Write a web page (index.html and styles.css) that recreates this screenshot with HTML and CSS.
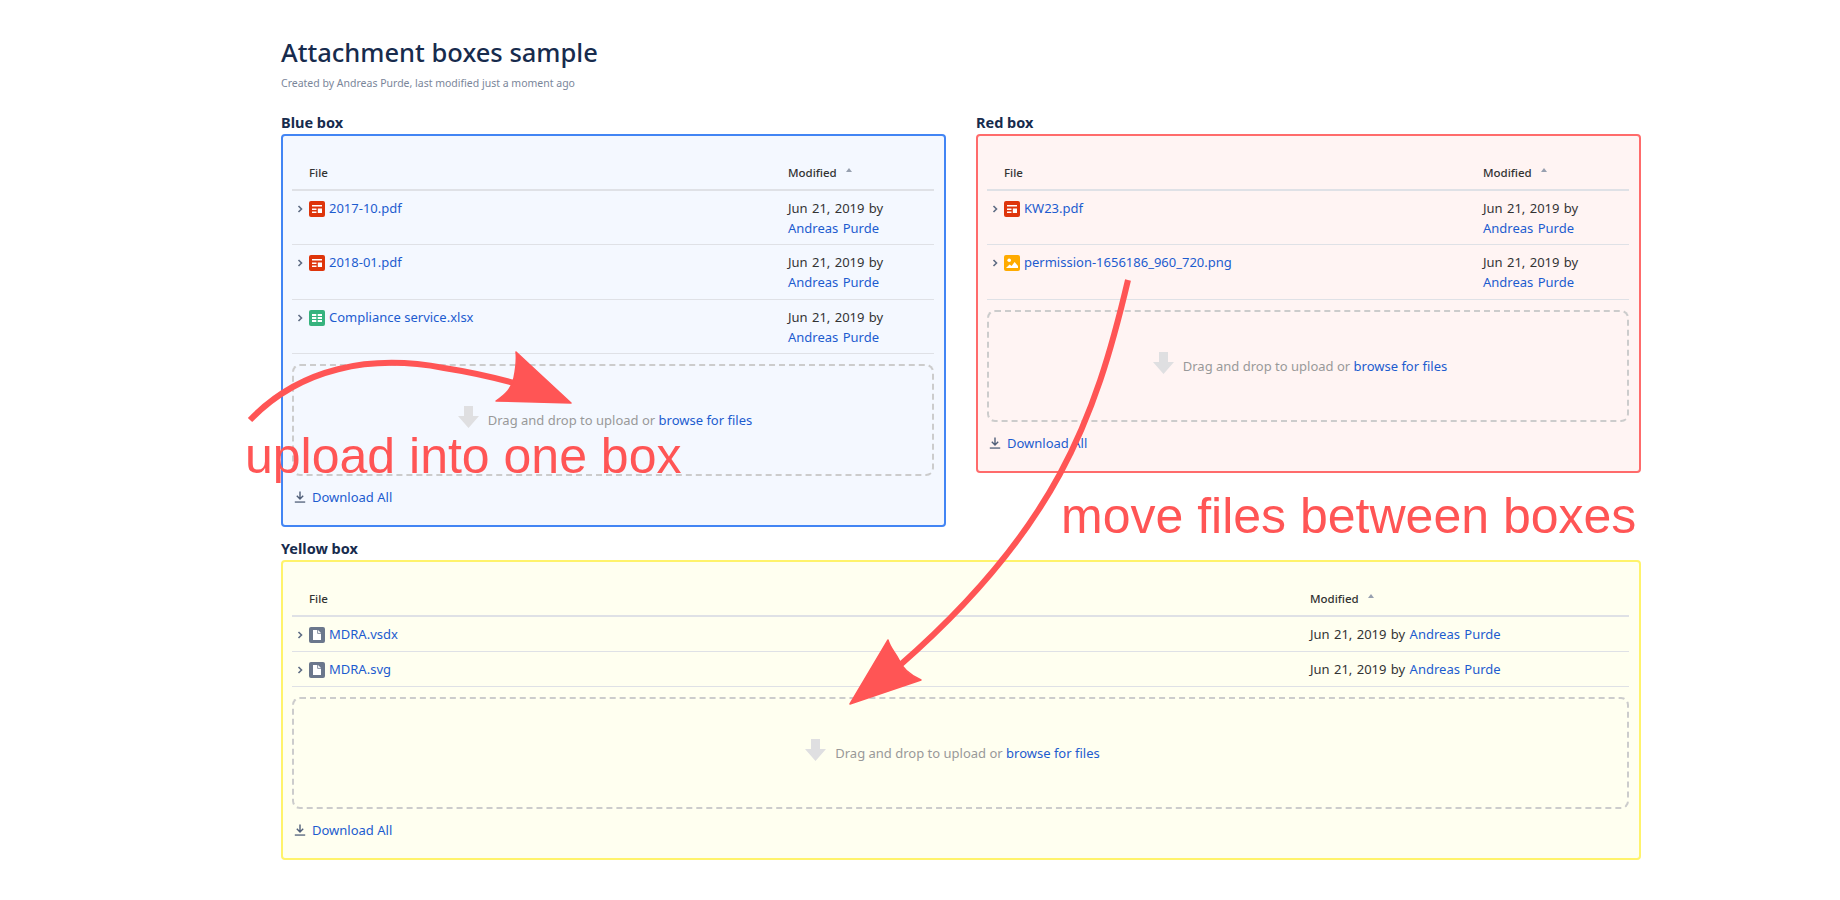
FILE: index.html
```html
<!DOCTYPE html>
<html lang="en">
<head>
    <meta charset="UTF-8">
    <meta name="viewport" content="width=device-width, initial-scale=1.0">
    <title>Attachment boxes sample</title>
    <link rel="stylesheet" href="styles.css">
</head>
<body>
    <svg class="icon-defs" width="0" height="0">
        <symbol id="i-chevron" viewBox="0 0 8 10"><path d="M2.5 2l3 3-3 3" fill="none" stroke="#5e6c84" stroke-width="1.6"/></symbol>
        <symbol id="i-pdf" viewBox="0 0 16 16"><rect width="16" height="16" rx="2" fill="#de350b"/><path d="M3 4h10v1.5H3zM3 7.5h4.5V9H3zM3 10.5h4.5V12H3zM8.8 7.5H13V12H8.8z" fill="#fff"/></symbol>
        <symbol id="i-xls" viewBox="0 0 16 16"><rect width="16" height="16" rx="2" fill="#36b37e"/><path d="M3 4h4.3v2H3zM8.7 4H13v2H8.7zM3 7h4.3v2H3zM8.7 7H13v2H8.7zM3 10h4.3v2H3zM8.7 10H13v2H8.7z" fill="#fff"/></symbol>
        <symbol id="i-img" viewBox="0 0 16 16"><rect width="16" height="16" rx="2" fill="#ffab00"/><circle cx="5.2" cy="5.2" r="1.8" fill="#fff"/><path d="M2 13l3.6-3.6 2 1.6L10.6 7 14 11v2z" fill="#fff"/></symbol>
        <symbol id="i-doc" viewBox="0 0 16 16"><rect width="16" height="16" rx="2" fill="#6b778c"/><path d="M4 3h5l3 3v7H4z" fill="#fff"/><path d="M8.6 3v3.4H12" fill="none" stroke="#6b778c" stroke-width=".8"/></symbol>
        <symbol id="i-drop" viewBox="0 0 21 22"><path d="M6 0h9v10h6L10.5 22 0 10h6z" fill="#dfdfe1"/></symbol>
        <symbol id="i-download" viewBox="0 0 12 12"><path d="M6 .5v7M2.8 4.8L6 8l3.2-3.2" fill="none" stroke="#505f79" stroke-width="1.4"/><path d="M.8 10.4h10.4v1.3H.8z" fill="#505f79"/></symbol>
    </svg>

    <div class="page">
        <h1>Attachment boxes sample</h1>
        <p class="byline">Created by Andreas Purde, last modified just a moment ago</p>

        <div class="box-row">
            <section>
                <h2>Blue box</h2>
                <div class="box box-blue">
                    <table>
                        <thead>
                            <tr><th>File</th><th class="col-modified">Modified<span class="sort"></span></th></tr>
                        </thead>
                        <tbody>
                            <tr>
                                <td><div class="file"><svg class="chevron"><use href="#i-chevron"/></svg><svg class="type"><use href="#i-pdf"/></svg><a href="#">2017-10.pdf</a></div></td>
                                <td>Jun 21, 2019 by <a href="#">Andreas Purde</a></td>
                            </tr>
                            <tr>
                                <td><div class="file"><svg class="chevron"><use href="#i-chevron"/></svg><svg class="type"><use href="#i-pdf"/></svg><a href="#">2018-01.pdf</a></div></td>
                                <td>Jun 21, 2019 by <a href="#">Andreas Purde</a></td>
                            </tr>
                            <tr>
                                <td><div class="file"><svg class="chevron"><use href="#i-chevron"/></svg><svg class="type"><use href="#i-xls"/></svg><a href="#">Compliance service.xlsx</a></div></td>
                                <td>Jun 21, 2019 by <a href="#">Andreas Purde</a></td>
                            </tr>
                        </tbody>
                    </table>
                    <div class="dropzone"><svg class="drop-icon"><use href="#i-drop"/></svg>Drag and drop to upload or&nbsp;<a href="#">browse for files</a></div>
                    <div class="download"><svg><use href="#i-download"/></svg><a href="#">Download All</a></div>
                </div>
            </section>

            <section>
                <h2>Red box</h2>
                <div class="box box-red">
                    <table>
                        <thead>
                            <tr><th>File</th><th class="col-modified">Modified<span class="sort"></span></th></tr>
                        </thead>
                        <tbody>
                            <tr>
                                <td><div class="file"><svg class="chevron"><use href="#i-chevron"/></svg><svg class="type"><use href="#i-pdf"/></svg><a href="#">KW23.pdf</a></div></td>
                                <td>Jun 21, 2019 by <a href="#">Andreas Purde</a></td>
                            </tr>
                            <tr>
                                <td><div class="file"><svg class="chevron"><use href="#i-chevron"/></svg><svg class="type"><use href="#i-img"/></svg><a href="#">permission-1656186_960_720.png</a></div></td>
                                <td>Jun 21, 2019 by <a href="#">Andreas Purde</a></td>
                            </tr>
                        </tbody>
                    </table>
                    <div class="dropzone"><svg class="drop-icon"><use href="#i-drop"/></svg>Drag and drop to upload or&nbsp;<a href="#">browse for files</a></div>
                    <div class="download"><svg><use href="#i-download"/></svg><a href="#">Download All</a></div>
                </div>
            </section>
        </div>

        <section class="wide-section">
            <h2>Yellow box</h2>
            <div class="box box-yellow">
                <table>
                    <thead>
                        <tr><th>File</th><th class="col-modified">Modified<span class="sort"></span></th></tr>
                    </thead>
                    <tbody>
                        <tr>
                            <td><div class="file"><svg class="chevron"><use href="#i-chevron"/></svg><svg class="type"><use href="#i-doc"/></svg><a href="#">MDRA.vsdx</a></div></td>
                            <td>Jun 21, 2019 by <a href="#">Andreas Purde</a></td>
                        </tr>
                        <tr>
                            <td><div class="file"><svg class="chevron"><use href="#i-chevron"/></svg><svg class="type"><use href="#i-doc"/></svg><a href="#">MDRA.svg</a></div></td>
                            <td>Jun 21, 2019 by <a href="#">Andreas Purde</a></td>
                        </tr>
                    </tbody>
                </table>
                <div class="dropzone"><svg class="drop-icon"><use href="#i-drop"/></svg>Drag and drop to upload or&nbsp;<a href="#">browse for files</a></div>
                <div class="download"><svg><use href="#i-download"/></svg><a href="#">Download All</a></div>
            </div>
        </section>
    </div>

    <!-- red annotations drawn over the page -->
    <svg class="arrows" width="1840" height="900" viewBox="0 0 1840 900">
        <path d="M250 420C300 368 370 354 444 368C470 372 492 377 514 383" fill="none" stroke="#ff5555" stroke-width="6"/>
        <path d="M516 352L571 403L496 401C506 394 512 388 514 378C516 368 517 360 516 352z" fill="#ff5555" stroke="#ff5555" stroke-width="1.5" stroke-linejoin="round"/>
        <path d="M1128 280C1095 420 1055 530 899 666" fill="none" stroke="#ff5555" stroke-width="6"/>
        <path d="M888 640L850 704L921 680C908 674 902 668 899 660C895 652 890 648 888 640z" fill="#ff5555" stroke="#ff5555" stroke-width="1.5" stroke-linejoin="round"/>
    </svg>
    <span class="note note-upload">upload into one box</span>
    <span class="note note-move">move files between boxes</span>
</body>
</html>
```

FILE: styles.css
```css
body {
    position: relative;
    margin: 0;
    height: 900px;
    overflow: hidden;
    background: #fff;
    color: #333;
    font-family: "Noto Sans", Arial, sans-serif;
    font-size: 13px;
    line-height: 20px;
}

a {
    color: #1d5ccf;
    text-decoration: none;
}

.icon-defs {
    position: absolute;
}

.page {
    width: 1360px;
    padding: 36px 0 0 281px;
}

h1 {
    margin: 0;
    color: #172b4d;
    font-size: 25.5px;
    font-weight: 500;
    line-height: 32px;
}

.byline {
    margin: 5px 0 0;
    color: #7a869a;
    font-size: 10.5px;
    line-height: 20px;
}

h2 {
    margin: 0 0 2px;
    color: #172b4d;
    font-size: 14.5px;
    font-weight: 700;
    line-height: 20px;
}

.box-row {
    display: grid;
    grid-template-columns: 665px 665px;
    gap: 30px;
    align-items: start;
    margin-top: 19px;
}

.wide-section {
    margin-top: 11px;
}

.box {
    padding: 11px 10px 18px 9px;
    border: 2px solid;
    border-radius: 4px;
}

.box-blue {
    border-color: #4285f4;
    background: #f4f8ff;
}

.box-red {
    border-color: #ff6b6b;
    background: #fff4f3;
}

.box-yellow {
    border-color: #fff36b;
    background: #fffff0;
}

table {
    width: 100%;
    border-collapse: collapse;
    table-layout: fixed;
}

th {
    padding: 16px 8px 6px 17px;
    border-bottom: 2px solid #dfe1e6;
    color: #333;
    font-size: 11.5px;
    font-weight: 500;
    line-height: 20px;
    text-align: left;
}

td {
    padding: 8px 8px 6px 4px;
    border-bottom: 1px solid #dfe1e6;
    line-height: 19.7px;
    vertical-align: top;
}

.col-modified {
    width: 138px;
    padding-left: 8px;
}

td:last-child {
    padding-left: 8px;
    word-spacing: 1px;
}

.box-yellow .col-modified {
    width: 311px;
}

.sort {
    display: inline-block;
    margin-left: 9px;
    border: 3px solid transparent;
    border-top: 0;
    border-bottom: 4px solid #97a0af;
    vertical-align: 5px;
}

.file {
    display: flex;
    align-items: center;
}

.chevron {
    width: 8px;
    height: 10px;
    margin-right: 5px;
}

.type {
    width: 16px;
    height: 16px;
    margin-right: 4px;
}

.dropzone {
    display: flex;
    align-items: center;
    justify-content: center;
    height: 108px;
    margin-top: 10px;
    padding-right: 16px;
    border: 2px dashed #ccc;
    border-radius: 8px;
    color: #999;
    font-size: 13px;
}

.drop-icon {
    width: 21px;
    height: 22px;
    margin: -6px 9px 0 0;
}

.download {
    display: flex;
    align-items: center;
    gap: 6px;
    margin-top: 11px;
    padding-left: 2px;
    font-size: 13px;
}

.download svg {
    width: 12px;
    height: 12px;
}

.arrows {
    position: absolute;
    top: 0;
    left: 0;
    pointer-events: none;
}

.note {
    position: absolute;
    color: #ff5555;
    font-family: "Liberation Sans", Arial, sans-serif;
    font-size: 50px;
    line-height: 56px;
    white-space: nowrap;
}

.note-upload {
    top: 428px;
    left: 245px;
}

.note-move {
    top: 488px;
    left: 1061px;
}
```
